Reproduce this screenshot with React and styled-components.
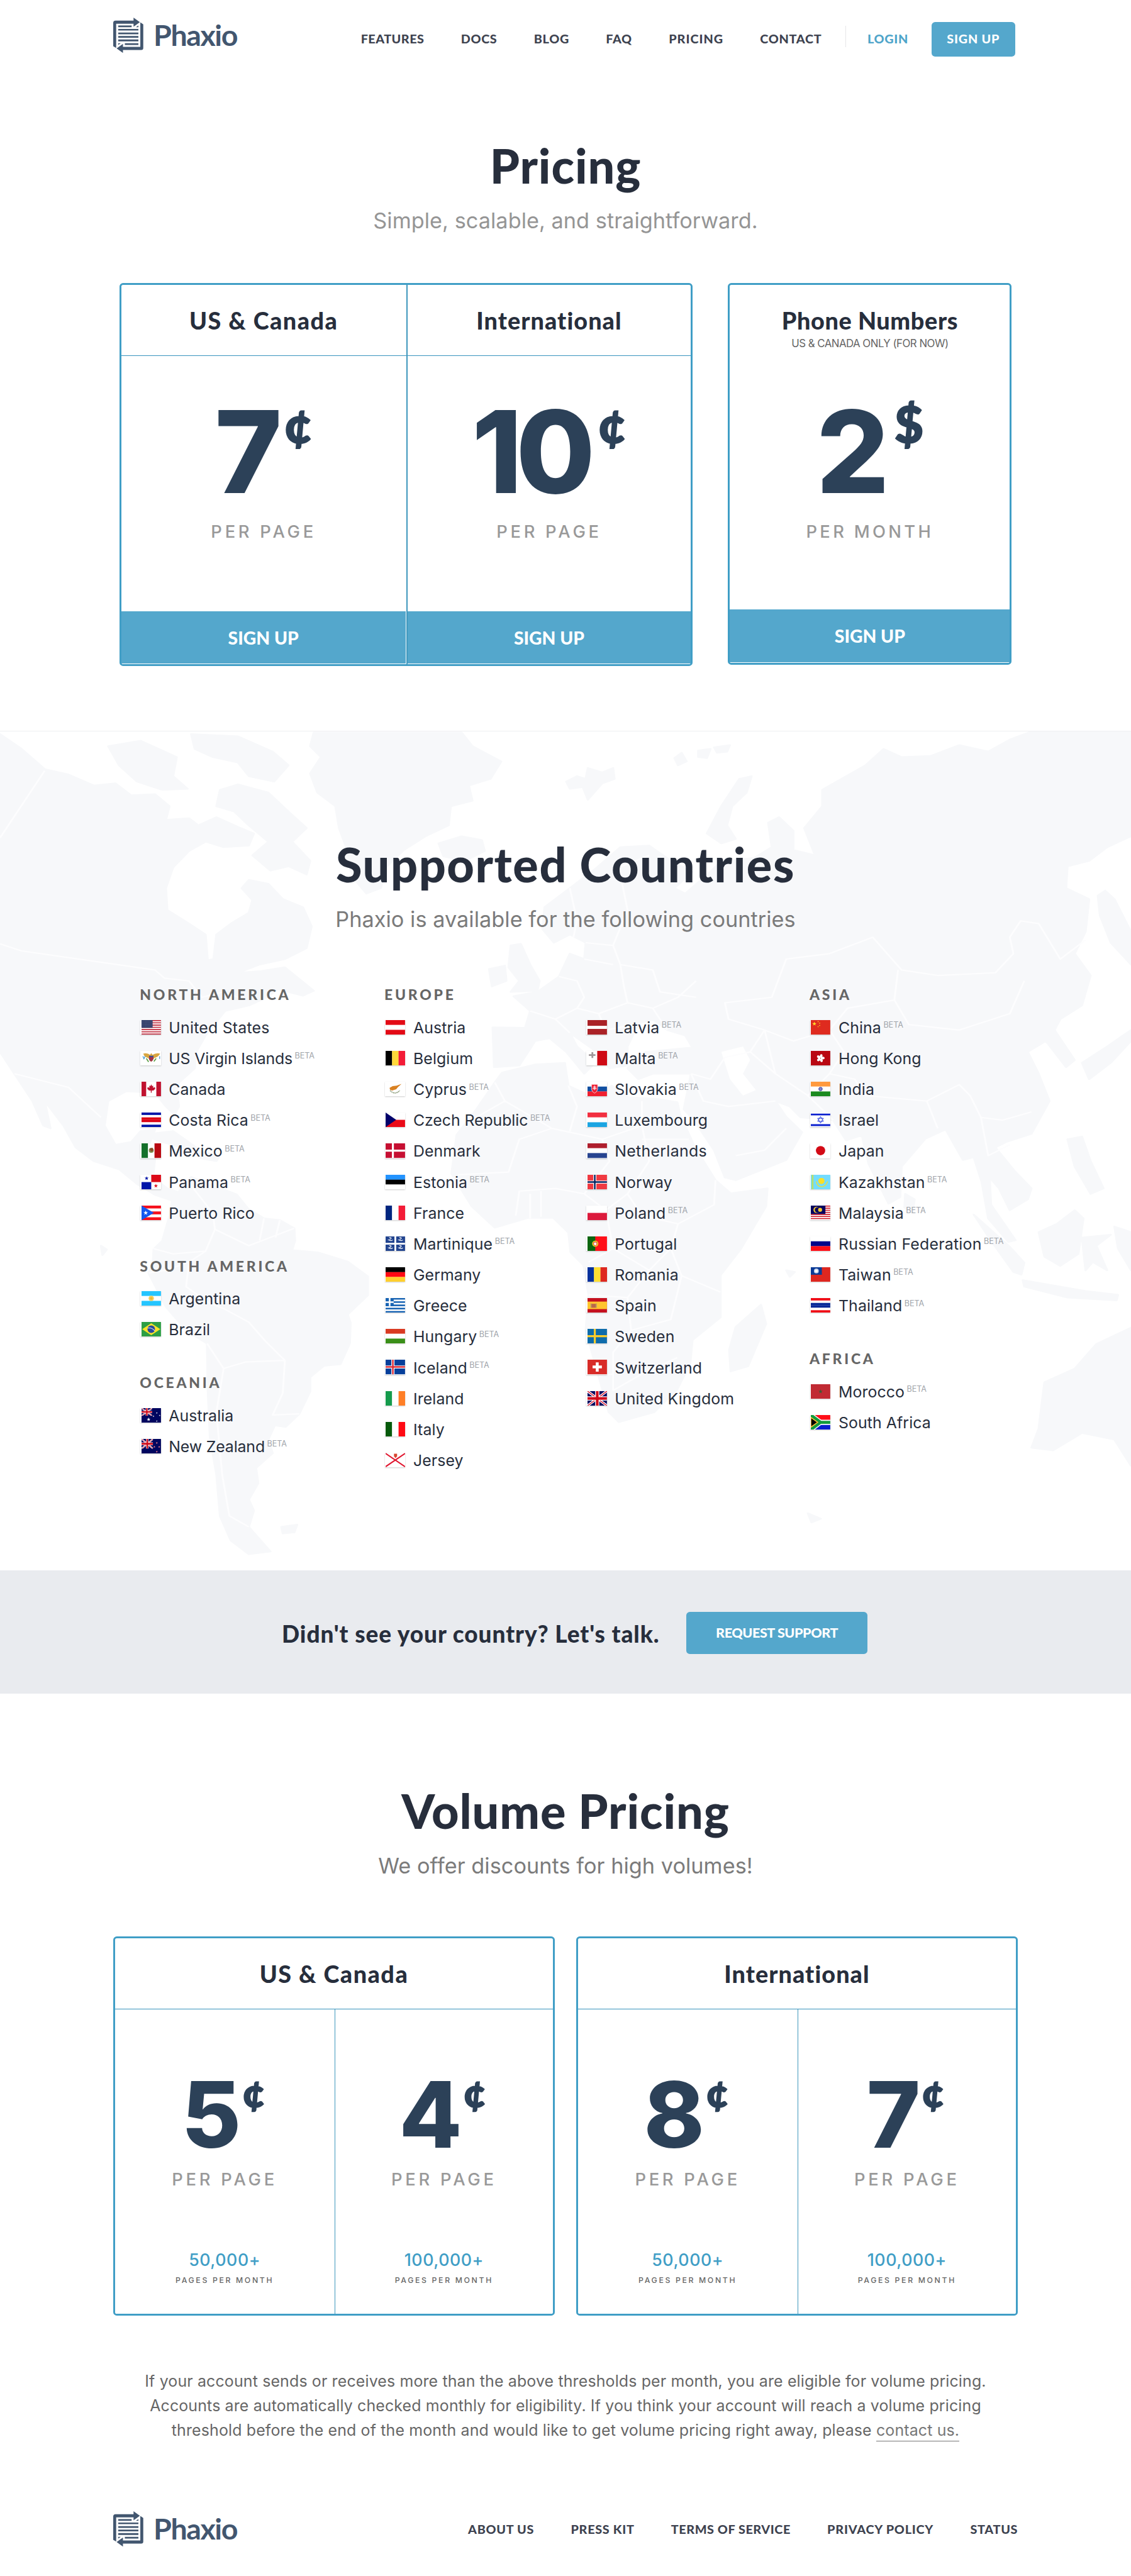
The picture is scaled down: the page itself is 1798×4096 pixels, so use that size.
import React from "react";
import styled, { createGlobalStyle } from "styled-components";

/* 1rem = ten design pixels */
const GlobalStyle = createGlobalStyle`
  html { font-size: 7.0234px; }
  body { margin: 0; background: #fff; color: #272e3c; font-family: Inter, "Liberation Sans", sans-serif; }
  *, *::before, *::after { box-sizing: border-box; }
`;

const display = `Lato, "Liberation Sans", sans-serif`;
const body = `Inter, "Liberation Sans", sans-serif`;
const c = {
  ink: "#272e3c",
  nav: "#3e4350",
  logo: "#42566f",
  price: "#2c4158",
  blue: "#54a7cc",
  line: "#409ec6",
  grey: "#999",
  dark: "#666",
};

const Page = styled.div`
  width: 256rem;
  height: 4096px;
  overflow: hidden;
  background: #fff;
`;

/* ---------- logo and navigation ---------- */

const LogoLink = styled.a`
  display: flex;
  align-items: center;
  gap: 2.35rem;
  height: 8rem;
  color: ${c.logo};
  svg { width: 6.8rem; height: 8rem; display: block; }
`;
const LogoName = styled.span`
  font: 700 6.63rem/7.8rem ${display};
  letter-spacing: -0.03em;
  margin-top: -0.2rem;
`;

const Logo = () => (
  <LogoLink>
    <svg viewBox="33 30 204 240" fill="currentColor">
      <path d="M33 66Q33 50 49 50H171V30L214 61L171 92V72H53V236L33 224Z" />
      <path d="M217 62L237 76V236Q237 250 223 250H99V270L56 239L99 208V229H217Z" />
      <path d="M67 83H158V95H67ZM187 95L204 83V95ZM67 107H204V118H67ZM67 131H204V143H67ZM67 155H204V167H67ZM67 179H204V191H67ZM112 204H204V216H112ZM67 204H84L67 216Z" />
    </svg>
    <LogoName>Phaxio</LogoName>
  </LogoLink>
);

const Header = styled.header`
  display: flex;
  justify-content: space-between;
  align-items: flex-start;
  height: 16rem;
  padding: 4rem 26.2rem 0 25.6rem;
`;
const Nav = styled.nav`
  display: flex;
  align-items: center;
  gap: 8.3rem;
`;
const NavLink = styled.a`
  font: 900 2.82rem/8rem ${display};
  letter-spacing: ${(p) => p.$track || "0.035em"};
  color: ${(p) => (p.$accent ? "#4fa5ca" : c.nav)};
  white-space: nowrap;
`;
const HeaderNav = styled(Nav)`
  padding-top: 0.7rem;
  height: 8.8rem;
`;
const Account = styled.div`
  display: flex;
  align-items: center;
  margin-left: -3rem;
`;
const Separator = styled.span`
  width: 1px;
  height: 4.8rem;
  margin: -1rem 4.9rem 0 0;
  background: #e6e6e8;
`;
const SignUp = styled.a`
  height: 7.9rem;
  width: 19rem;
  margin: 0.3rem 0 0 5.2rem;
  border-radius: 0.8rem;
  background: ${c.blue};
  color: #fff;
  text-align: center;
  font: 900 2.82rem/7.6rem ${display};
  letter-spacing: 0.04em;
`;

/* ---------- headings ---------- */

const Title = styled.h1`
  margin: 0;
  padding-top: 0.4rem;
  height: 12rem;
  font: 900 10.76rem/12rem ${display};
  letter-spacing: ${(p) => p.$track};
  text-align: center;
  color: ${c.ink};
`;
const Subtitle = styled.p`
  margin: 3.9rem 0 0;
  font: 400 4.88rem/6rem ${body};
  letter-spacing: 0.001em;
  text-align: center;
  color: ${(p) => p.$color || "#7b7b7b"};
`;

/* ---------- price cards ---------- */

const Hero = styled.section`
  height: 149.5rem;
  padding-top: 15.04rem;
`;
const PriceRow = styled.div`
  display: flex;
  align-items: flex-start;
  gap: 8rem;
  padding: 11.1rem 0 0 27rem;
`;
const Card = styled.div`
  display: grid;
  grid-template-columns: ${(p) => p.$cols || "1fr"};
  grid-template-rows: ${(p) => p.$rows || "1fr"};
  width: ${(p) => p.$w};
  height: ${(p) => p.$h};
  border: 3px solid ${c.line};
  border-radius: 0.8rem;
`;
const Cell = styled.div`
  display: flex;
  flex-direction: column;
  align-items: center;
  border-right: ${(p) => (p.$divider ? `${p.$divider}px solid #3f97bd` : 0)};
`;
const CardTitle = styled.h2`
  align-self: stretch;
  margin: 0;
  height: 16.1rem;
  font: 900 5.38rem/16.1rem ${display};
  letter-spacing: ${(p) => p.$track};
  text-align: center;
  border-bottom: 1px solid #3894bd;
  grid-column: 1 / -1;
`;
const PlainTitle = styled.h2`
  margin: 5.1rem 0 0;
  font: 900 5.38rem/6rem ${display};
  letter-spacing: 0.0165em;
`;
const Note = styled.p`
  margin: 0.8rem 0 0;
  font: 400 2.4rem/3rem ${body};
  letter-spacing: -0.031em;
  color: ${c.dark};
`;
const Price = styled.div`
  display: flex;
  align-items: flex-start;
  color: ${c.price};
  margin-top: ${(p) => p.$top};
  padding-right: ${(p) => (p.$small ? "0.6rem" : 0)};
  font: 800 ${(p) => (p.$small ? "20.7rem/16rem" : "25.9rem/20rem")} ${body};
  letter-spacing: -0.055em;
`;
const Unit = styled.span`
  font: 900 ${(p) => (p.$small ? "9rem" : "11.3rem")}/1 ${display};
  -webkit-text-stroke: 0.3rem ${c.price};
  letter-spacing: 0;
  margin: ${(p) => (p.$small ? "-1.7rem" : "-2rem")} 0 0 ${(p) => p.$gap || "1.8rem"};
`;
const Per = styled.p`
  margin: ${(p) => p.$top} 0 0;
  font: 450 3.9rem/4rem ${body};
  letter-spacing: ${(p) => p.$track || "0.172em"};
  color: ${c.grey};
`;
const CardButton = styled.a`
  align-self: stretch;
  margin: auto ${(p) => (p.$gapRight ? "1px" : 0)} 1px 0;
  height: 11.9rem;
  background: ${c.blue};
  color: #fff;
  text-align: center;
  font: 900 4.03rem/12.1rem ${display};
`;

/* ---------- supported countries ---------- */

const Countries = styled.section`
  position: relative;
  height: 190rem;
  padding-top: 23.6rem;
  border-top: 1px solid #eeeff1;
`;
const MapLayer = styled.svg`
  position: absolute;
  inset: 0;
  width: 100%;
  height: 100%;
`;
const CountriesBody = styled.div`
  position: relative;
`;
const Columns = styled.div`
  display: grid;
  grid-template-columns: 55.35rem 45.6rem 50.65rem 1fr;
  padding: 12rem 0 0 31.65rem;
`;
const Column = styled.div`
  padding-top: ${(p) => (p.$offset ? "6.07rem" : 0)};
`;
const Group = styled.div`
  margin-bottom: 6.36rem;
`;
const Region = styled.h3`
  margin: 0 0 2.07rem;
  font: 900 3.27rem/4rem ${display};
  letter-spacing: 0.163em;
  color: ${c.dark};
`;
const Country = styled.div`
  display: flex;
  align-items: center;
  height: 7rem;
  font: 400 3.54rem/7rem ${body};
  letter-spacing: ${(p) => p.$track || "0.003em"};
  white-space: nowrap;
`;
const Beta = styled.span`
  font-size: 1.8rem;
  line-height: 7rem;
  letter-spacing: -0.005em;
  margin: -1.3rem 0 0 0.5rem;
  color: #a0a4aa;
`;
const FlagBox = styled.span`
  width: 4.6rem;
  height: 3.3rem;
  padding-left: 0.2rem;
  margin: -0.3rem 1.8rem 0 0.15rem;
  background: #fff;
  box-shadow: 0 1px 2px rgba(0, 0, 0, 0.2);
  > svg { display: block; width: 100%; height: 100%; }
`;

/* ---------- banner ---------- */

const Banner = styled.section`
  display: flex;
  align-items: center;
  height: 27.9rem;
  padding: 0.5rem 0 0 63.8rem;
  background: #e9ebef;
`;
const Question = styled.p`
  margin: 0.4rem 0 0;
  width: 91.5rem;
  font: 900 5.27rem/8rem ${display};
  letter-spacing: 0.025em;
  white-space: nowrap;
`;
const Request = styled.a`
  width: 41.1rem;
  height: 9.5rem;
  border-radius: 0.8rem;
  background: ${c.blue};
  color: #fff;
  text-align: center;
  font: 900 3.08rem/9.4rem ${display};
  letter-spacing: -0.022em;
`;

/* ---------- volume pricing ---------- */

const Volume = styled.section`
  padding-top: 20.1rem;
`;
const VolumeRow = styled.div`
  display: flex;
  gap: 4.8rem;
  padding: 13rem 0 0 25.6rem;
`;
const Threshold = styled.p`
  margin: 13.8rem 0 0;
  font: 500 3.81rem/5rem ${body};
  letter-spacing: 0.02em;
  color: ${c.line};
`;
const PerMonth = styled.p`
  margin: 1.07rem 0 0;
  font: 450 1.75rem/2.4rem ${body};
  letter-spacing: 0.215em;
  color: ${c.dark};
`;
const Terms = styled.p`
  margin: 12.1rem 0 0;
  font: 400 3.55rem/5.6rem ${body};
  letter-spacing: 0.0058em;
  text-align: center;
  white-space: nowrap;
  color: ${c.dark};
`;
const TextLink = styled.a`
  color: #777;
  padding-bottom: 0.2rem;
  border-bottom: 1px solid #777;
`;
const Footer = styled.footer`
  display: flex;
  justify-content: space-between;
  align-items: center;
  padding: 15.5rem 25.6rem 0;
`;

/* ---------- flags ---------- */

const horizontal = (...colors) => {
  const h = 33 / colors.length;
  return colors.map((f, i) => <rect key={i} y={i * h} width="44" height={h + 0.2} fill={f} />);
};
const vertical = (...colors) => {
  const w = 44 / colors.length;
  return colors.map((f, i) => <rect key={i} x={i * w} width={w + 0.2} height="33" fill={f} />);
};
const cross = (bg, outer, inner) => (
  <>
    <rect width="44" height="33" fill={bg} />
    <path d="M16.500 0V33M0 16.500H44" stroke={outer} strokeWidth={inner ? 7 : 4.5} />
    {inner && <path d="M16.500 0V33M0 16.500H44" stroke={inner} strokeWidth="3.500" />}
  </>
);
const star = (x, y, r, fill) => {
  const pts = Array.from({ length: 10 }, (_, i) => {
    const a = (Math.PI / 5) * i - Math.PI / 2;
    const q = i % 2 ? r * 0.4 : r;
    return `${(x + q * Math.cos(a)).toFixed(2)},${(y + q * Math.sin(a)).toFixed(2)}`;
  });
  return <polygon points={pts.join(" ")} fill={fill} />;
};
const union = (w, h) => (
  <svg width={w} height={h} viewBox="0 0 44 33" preserveAspectRatio="none">
    <rect width="44" height="33" fill="#00065f" />
    <path d="M0 0L44 33M44 0L0 33" stroke="#fff" strokeWidth="5.500" />
    <path d="M0 0L44 33M44 0L0 33" stroke="#d8001b" strokeWidth="1.800" />
    <path d="M22 0V33M0 16.500H44" stroke="#fff" strokeWidth="9.500" />
    <path d="M22 0V33M0 16.500H44" stroke="#d00a1a" strokeWidth="6" />
  </svg>
);

const flags = {
  us: (
    <>
      {horizontal(..."rwrwrwrwrwrwr".split("").map((k) => (k === "r" ? "#bf2a3c" : "#fff")))}
      <rect width="25" height="17.500" fill="#2d3a66" />
      <path d="M2 3H24M2 6.500H24M2 10H24M2 13.500H24" stroke="#cfd4e4" strokeWidth="1" strokeDasharray="1 2.200" />
    </>
  ),
  vi: (
    <>
      <rect width="44" height="33" fill="#fff" />
      <path d="M4 6Q14 4 19 9L22 5L25 9Q32 4 42 6Q38 14 29 16L22 25L15 16Q6 14 4 6Z" fill="#d9a640" />
      <path d="M17 12H27V18Q25 23 22 24Q18 23 17 18Z" fill="#a3334a" />
      <path d="M17 11H27V14H17Z" fill="#3a4f9a" />
      <path d="M3 12L5.500 18L8 12M41 12V18" stroke="#2f8fce" strokeWidth="1.600" fill="none" />
      <path d="M11 17L16 25M33 17L28 24" stroke="#5fa04a" strokeWidth="2.500" />
    </>
  ),
  ca: (
    <>
      <rect width="44" height="33" fill="#fff" />
      <path d="M0 0H10.500V33H0ZM33.500 0H44V33H33.500Z" fill="#c0122f" />
      <path d="M22 6L24 10L26.500 9L26 14L30 12L31 16L27 20H23V25H21V20H17L13 16L14 12L18 14L17.500 9L20 10Z" fill="#c0122f" />
    </>
  ),
  cr: horizontal("#0015a8", "#fff", "#dc0012", "#dc0012", "#fff", "#0015a8"),
  mx: (
    <>
      {vertical("#14702b", "#fff", "#b90a12")}
      <circle cx="22" cy="16" r="5.500" fill="#7c8c4c" />
      <path d="M18 12L25 10L27 16L22 19Z" fill="#8a4a28" />
    </>
  ),
  pa: (
    <>
      <rect width="44" height="33" fill="#fff" />
      <rect x="22" width="22" height="16.500" fill="#dc0a18" />
      <rect y="16.500" width="22" height="16.500" fill="#0015a8" />
      {star(11.5, 8, 4.8, "#0015a8")}
      {star(32.5, 25, 4.8, "#dc0a18")}
    </>
  ),
  pr: (
    <>
      {horizontal("#f5101c", "#fff", "#f5101c", "#fff", "#f5101c")}
      <path d="M0 0L28 16.500L0 33Z" fill="#1358f0" />
      {star(9.5, 16.5, 5.4, "#fff")}
    </>
  ),
  ar: (
    <>
      {horizontal("#25c5ff", "#fff", "#25c5ff")}
      <circle cx="22" cy="16.500" r="6" fill="#f5cf5a" />
      <circle cx="22" cy="16.500" r="3" fill="#eab93c" />
    </>
  ),
  br: (
    <>
      <rect width="44" height="33" fill="#2e9f45" />
      <path d="M22 3L42.500 16.500L22 30L1.500 16.500Z" fill="#fae22a" />
      <circle cx="22" cy="16.500" r="8.500" fill="#2b4a9b" />
      <path d="M14 14Q23 12 30 20" stroke="#dfe8f4" strokeWidth="1.500" fill="none" />
    </>
  ),
  au: (
    <>
      <rect width="44" height="33" fill="#00065f" />
      {union(24, 17.5)}
      {star(16, 25.5, 4.5, "#fff")}
      {star(34.5, 11, 2, "#fff")}
      {star(27, 18.5, 2, "#fff")}
      {star(41, 16.5, 2, "#fff")}
      {star(34.5, 29.5, 2, "#fff")}
    </>
  ),
  nz: (
    <>
      <rect width="44" height="33" fill="#00065f" />
      {union(26, 22)}
      {star(34.5, 9, 2.6, "#f3808c")}
      {star(29, 18, 2.6, "#f3808c")}
      {star(40, 18, 2.6, "#f3808c")}
      {star(34.5, 29, 2.6, "#f3808c")}
    </>
  ),
  at: horizontal("#e30a15", "#fff", "#e30a15"),
  be: vertical("#000", "#ffd93a", "#f31c37"),
  cy: (
    <>
      <rect width="44" height="33" fill="#fff" />
      <path d="M9 14L16 10L25 9L36 5L28 12L24 17L15 20L10 18Z" fill="#d98122" />
      <path d="M10 20Q22 31 32 20" stroke="#8a9b78" strokeWidth="2.200" fill="none" strokeDasharray="3 1" />
    </>
  ),
  cz: (
    <>
      {horizontal("#fff", "#ea0a18")}
      <path d="M0 0L24 16.500L0 33Z" fill="#02026b" />
    </>
  ),
  dk: cross("#c60f32", "#fff"),
  ee: horizontal("#2393ff", "#000", "#fff"),
  fr: vertical("#00267f", "#fff", "#f31c37"),
  mq: (
    <>
      <rect width="44" height="33" fill="#22448f" />
      <path d="M22 0V33M0 16.500H44" stroke="#fff" strokeWidth="4" />
      {[[11, 7], [34, 7], [11, 25], [34, 25]].map(([x, y]) => (
        <path key={x + "-" + y} d={`M${x - 3} ${y - 4}q6 -1 4 2t-5 3q5 3 9 0`} stroke="#fff" strokeWidth="1.600" fill="none" />
      ))}
    </>
  ),
  de: horizontal("#000", "#ff0a14", "#ffcf2e"),
  gr: (
    <>
      {horizontal(..."bwbwbwbwb".split("").map((k) => (k === "b" ? "#1763b3" : "#fff")))}
      <rect width="18.300" height="18.300" fill="#1763b3" />
      <path d="M9.200 0V18.300M0 9.200H18.300" stroke="#fff" strokeWidth="3.600" />
    </>
  ),
  hu: horizontal("#d93a22", "#fff", "#3a8f18"),
  is: cross("#063f9b", "#fff", "#db2a34"),
  ie: vertical("#159b4c", "#fff", "#ff7f27"),
  it: vertical("#065a0c", "#fff", "#ff0a14"),
  je: (
    <>
      <rect width="44" height="33" fill="#fff" />
      <path d="M0 1.500L44 31.500M44 1.500L0 31.500" stroke="#e0162f" strokeWidth="3" />
      <path d="M19 2H26V8L22.500 12L19 8Z" fill="#d8452f" />
    </>
  ),
  lv: (
    <>
      <rect width="44" height="33" fill="#aa2227" />
      <rect y="13" width="44" height="7" fill="#fff" />
    </>
  ),
  mt: (
    <>
      {vertical("#fff", "#cf0a15")}
      <path d="M11 3V16M3 9.500H18" stroke="#a0989a" strokeWidth="4" />
    </>
  ),
  sk: (
    <>
      {horizontal("#fff", "#114fa1", "#f01f2f")}
      <path d="M9 6H23V17Q21 24 16 26Q10 23 9 17Z" fill="#ee2035" stroke="#fff" strokeWidth="1" />
      <path d="M16 9V19M12.500 12H19.500M11.500 15.500H20.500" stroke="#fff" strokeWidth="1.500" />
    </>
  ),
  lu: horizontal("#f22f40", "#fff", "#1ba4e2"),
  nl: horizontal("#ae1e2d", "#fff", "#27448f"),
  no: cross("#f03a42", "#fff", "#04215f"),
  pl: horizontal("#fff", "#dc1a3c"),
  pt: (
    <>
      <rect width="44" height="33" fill="#ff0f18" />
      <rect width="17.500" height="33" fill="#0b650e" />
      <circle cx="17.500" cy="16.500" r="7" fill="#e8d02c" />
      <path d="M14 13H21V18Q19 21 17.500 21Q15 21 14 18Z" fill="#fff" stroke="#e3202c" strokeWidth="1.400" />
    </>
  ),
  ro: vertical("#06319c", "#ffdf32", "#de2820"),
  es: (
    <>
      <rect width="44" height="33" fill="#c5101f" />
      <rect y="8" width="44" height="17" fill="#ffc52e" />
      <path d="M9 13H19V22H9Z" fill="#b9664a" />
      <path d="M8 12V22M20 12V22" stroke="#9a8f7a" strokeWidth="1.500" />
    </>
  ),
  se: cross("#0f6cab", "#ffcd2a"),
  ch: (
    <>
      <rect width="44" height="33" fill="#d82b27" />
      <path d="M22 6V27M11.500 16.500H32.500" stroke="#fff" strokeWidth="6.500" />
    </>
  ),
  gb: union(44, 33),
  cn: (
    <>
      <rect width="44" height="33" fill="#df2b1f" />
      {star(8, 8.5, 5, "#ffdc28")}
      {star(16.5, 3.5, 1.8, "#ffdc28")}
      {star(20, 7, 1.8, "#ffdc28")}
      {star(20, 12, 1.8, "#ffdc28")}
      {star(16.5, 15, 1.8, "#ffdc28")}
    </>
  ),
  hk: (
    <>
      <rect width="44" height="33" fill="#b90812" />
      {[0, 72, 144, 216, 288].map((a) => (
        <ellipse key={a} cx="22" cy="11.500" rx="3" ry="4.300" fill="#fff" transform={`rotate(${a + 15} 22 16.500)`} />
      ))}
    </>
  ),
  in: (
    <>
      {horizontal("#ff9a3e", "#fff", "#1b8a1f")}
      <circle cx="22" cy="16.500" r="4" fill="#8186c8" stroke="#272d92" strokeWidth="1.200" />
    </>
  ),
  il: (
    <>
      <rect width="44" height="33" fill="#fff" />
      <path d="M0 4.500H44M0 28.500H44" stroke="#0a1fcf" strokeWidth="4" />
      <path d="M22 9L28.500 20H15.500ZM22 24L15.500 13H28.500Z" stroke="#2a40dc" strokeWidth="1.400" fill="none" />
    </>
  ),
  jp: (
    <>
      <rect width="44" height="33" fill="#fff" />
      <circle cx="22" cy="16.500" r="10.500" fill="#d30a15" />
    </>
  ),
  kz: (
    <>
      <rect width="44" height="33" fill="#73dcff" />
      <rect x="2" width="4" height="33" fill="#b9df6a" />
      <circle cx="24" cy="14" r="7" fill="#fbe025" />
      <path d="M12 15Q15 27 24 27Q34 27 38 15" stroke="#dfe24a" strokeWidth="2.200" fill="none" />
    </>
  ),
  my: (
    <>
      {horizontal(..."rwrwrwrwrwrwrw".split("").map((k) => (k === "r" ? "#cf1220" : "#fff")))}
      <rect width="33" height="19" fill="#05055f" />
      <circle cx="13" cy="9.500" r="7" fill="#fccb2e" />
      <circle cx="15" cy="9.500" r="6" fill="#05055f" />
      <circle cx="21" cy="9.500" r="4.500" fill="#fccb2e" />
    </>
  ),
  ru: horizontal("#fff", "#00058a", "#ff0f18"),
  tw: (
    <>
      <rect width="44" height="33" fill="#de2720" />
      <rect width="25" height="17" fill="#0b3b96" />
      <circle cx="12.500" cy="8.500" r="5.500" fill="#c5d1ea" />
      <circle cx="12.500" cy="8.500" r="3.200" fill="#fff" />
    </>
  ),
  th: horizontal("#f00d17", "#fff", "#062898", "#062898", "#fff", "#f00d17"),
  ma: (
    <>
      <rect width="44" height="33" fill="#c12a33" />
      {star(22, 16.5, 5, "#3c5a34")}
    </>
  ),
  za: (
    <>
      {horizontal("#ff0f18", "#fff", "#0a1ed0")}
      <path d="M0 0L22 16.500L0 33M18 16.500H44" stroke="#fff" strokeWidth="11" fill="none" />
      <path d="M0 0L22 16.500L0 33M18 16.500H44" stroke="#139b3c" strokeWidth="7" fill="none" />
      <path d="M0 5.500L15.500 16.500L0 27.500Z" fill="#000" stroke="#fcbf30" strokeWidth="2.200" />
    </>
  ),
};

const columns = [
  [
    ["North America", [["us", "United States", 0, "0.009em"], ["vi", "US Virgin Islands", 1, "-0.006em"], ["ca", "Canada"], ["cr", "Costa Rica", 1], ["mx", "Mexico", 1], ["pa", "Panama", 1], ["pr", "Puerto Rico"]]],
    ["South America", [["ar", "Argentina"], ["br", "Brazil"]]],
    ["Oceania", [["au", "Australia"], ["nz", "New Zealand", 1, "-0.006em"]]],
  ],
  [
    ["Europe", [["at", "Austria"], ["be", "Belgium"], ["cy", "Cyprus", 1], ["cz", "Czech Republic", 1, "-0.003em"], ["dk", "Denmark"], ["ee", "Estonia", 1], ["fr", "France"], ["mq", "Martinique", 1], ["de", "Germany"], ["gr", "Greece"], ["hu", "Hungary", 1], ["is", "Iceland", 1], ["ie", "Ireland"], ["it", "Italy"], ["je", "Jersey"]]],
  ],
  [
    [null, [["lv", "Latvia", 1], ["mt", "Malta", 1], ["sk", "Slovakia", 1], ["lu", "Luxembourg"], ["nl", "Netherlands", 0, "0.012em"], ["no", "Norway"], ["pl", "Poland", 1], ["pt", "Portugal"], ["ro", "Romania"], ["es", "Spain"], ["se", "Sweden"], ["ch", "Switzerland"], ["gb", "United Kingdom"]]],
  ],
  [
    ["Asia", [["cn", "China", 1], ["hk", "Hong Kong"], ["in", "India"], ["il", "Israel"], ["jp", "Japan"], ["kz", "Kazakhstan", 1], ["my", "Malaysia", 1], ["ru", "Russian Federation", 1, "0.009em"], ["tw", "Taiwan", 1], ["th", "Thailand", 1]]],
    ["Africa", [["ma", "Morocco", 1], ["za", "South Africa"]]],
  ],
];

/* ---------- world map ---------- */

const land = [
  "M0 18L30 45L62 82L95 92L130 112L160 108L182 130L215 128L235 150L230 175L262 172L275 185L300 170L330 188L352 200L345 222L310 225L285 215L262 232L240 262L230 300L232 340L262 365L285 385L288 432L296 430L300 385L320 365L345 345L350 322L335 300L345 285L372 292L392 320L420 335L432 370L425 410L395 430L360 440L330 455L362 452L395 445L435 488L420 497L385 485L370 500L345 515L312 525L300 545L285 570L272 600L270 630L245 660L248 700L242 715L230 700L215 675L175 672L150 690L145 735L160 770L182 765L195 745L215 742L205 775L190 790L215 795L212 830L232 850L250 858L238 872L215 862L190 842L165 815L130 800L105 775L88 735L62 690L70 740L60 735L45 690L20 640L0 600Z",
  "M435 15H640L655 40L695 68L680 100L650 112L655 140L625 150L622 185L590 205L560 230L535 262L528 300L508 310L492 285L482 255L480 225L470 190L465 150L440 125L430 90L445 60L430 40Z",
  "M265 18L330 22L378 50L400 75L380 105L345 95L330 70L295 60L270 45Z",
  "M330 110L372 125L400 160L425 190L405 215L430 250L425 275L400 260L375 268L350 240L372 215L345 185L325 160L300 150L305 120Z",
  "M150 40L195 30L245 60L240 95L260 118L225 120L190 105L165 75Z",
  "M608 218L640 205L668 212L672 232L645 250L615 242Z",
  "M785 105L800 95L812 100L815 80L835 88L850 80L852 100L835 108L815 138L808 115L790 118ZM935 62L945 52L952 68L940 75ZM968 48L985 45L980 62L968 60ZM990 42L1012 38L1008 50L994 52Z",
  "M708 405L722 402L735 440L748 470L745 488L708 490L720 470L705 445ZM678 448L700 442L702 470L682 480Z",
  "M239 870L265 829L328 861L344 887L366 905L388 908L408 923L409 946L405 963L440 967L482 984L510 1011L510 1046L482 1081L486 1096L485 1134L472 1172L449 1175L430 1196L430 1222L415 1263L396 1287L381 1284L372 1310L378 1335L355 1362L358 1390L345 1420L352 1440L345 1470L375 1515L345 1520L320 1495L305 1450L300 1374L291 1305L288 1217L287 1134L259 1111L230 1067L206 1005L212 987L213 961L225 946L235 900Z",
  "M390 1470L412 1466L408 1480L392 1482ZM195 752L240 745L272 775L268 782L225 765ZM275 782L305 790L300 800L278 795Z",
  "M696 638L742 623L783 620L788 662L823 683L848 662L872 683L911 686L939 692L943 716L964 776L992 835L1013 859L1064 850L1062 883L1027 961L999 1009L999 1086L960 1128L957 1170L939 1218L907 1260L858 1278L844 1260L830 1194L812 1110L816 1045L809 991L791 967L788 931L767 904L732 904L686 922L654 883L626 823L633 752L661 704L686 656Z",
  "M1055 1063L1062 1098L1037 1176L1013 1185L1011 1146L1020 1104Z",
  "M683 555L728 556L735 525L712 498L745 490L775 462L790 420L810 430L812 400L790 385L768 400L752 375L755 335L790 300L825 265L860 225L900 222L930 250L960 270L935 300L950 310L985 270L1000 250L1045 245L1070 225L1065 180L1080 170L1100 195L1100 230L1130 240L1115 190L1140 150L1140 120L1200 75L1225 45L1250 60L1290 58L1330 38L1370 50L1400 28L1430 13H1568V205L1535 225L1510 250L1480 260L1478 300L1510 320L1505 380L1490 420L1512 460L1500 515L1470 540L1462 560L1490 615L1478 628L1450 580L1425 600L1440 640L1455 690L1430 750L1395 765L1380 775L1408 820L1430 850L1425 870L1400 890L1385 850L1372 830L1374 880L1408 945L1398 948L1370 905L1361 838L1350 793L1335 798L1311 742L1283 759L1250 810L1248 866L1232 878L1221 849L1204 804L1195 753L1173 762L1155 725L1110 720L1095 700L1075 690L1090 719L1112 747L1090 798L1020 835L1005 830L990 780L962 725L948 705L955 660L958 640L905 640L885 650L870 630L895 600L960 592L950 570L925 560L905 540L885 548L870 590L870 625L845 630L822 595L790 565L800 590L825 620L810 640L785 600L762 575L742 580L720 625L685 628Z",
  "M980 200L1000 150L1025 100L1042 95L1035 125L1015 150L1008 185L1020 210L1000 218Z",
  "M1350 898L1400 957L1420 986L1416 1008L1405 1003L1374 946ZM1418 1018L1505 1038L1550 1045L1548 1055L1480 1050L1420 1030ZM1440 930L1465 915L1490 890L1502 905L1495 970L1470 992L1448 975ZM1500 940L1540 935L1520 955L1535 1000L1515 985L1505 1000ZM1480 760L1500 755L1512 800L1530 850L1512 860L1490 810ZM1545 920L1568 930V1000L1550 960Z",
  "M1448 1205L1490 1180L1520 1135L1568 1105V1358L1545 1310L1500 1298L1460 1330L1430 1325L1440 1290Z",
  "M1520 290L1545 320L1568 380V440L1540 400L1525 350ZM1500 620L1535 590L1568 560V580L1540 620L1510 650ZM1255 860L1268 870L1265 895L1254 885Z",
  "M1120 1445L1138 1455L1125 1462ZM1090 1000L1102 1003L1095 1012ZM140 955L148 962L142 972Z",
];
const seas = [
  "M1000 600L1030 590L1040 615L1030 640L1048 670L1030 680L1012 650Z",
  "M1568 215L1535 232L1508 262L1482 266L1490 300L1515 318L1535 300L1568 350Z",
];
const borders = [
  "M0 208L62 85M0 402L30 415L215 450L228 465L262 470L280 500L310 490L340 505",
  "M20 640L95 665L140 720",
  "M265 845L280 870L295 895L298 925L285 965L262 985L258 1030L290 1060L310 1070L345 1095L368 1130L395 1165L392 1225L378 1265L415 1263M298 925L345 955L408 923M366 905L360 945M388 908L382 940M287 1134L310 1180L340 1168L395 1165M310 1180L300 1260L308 1374L318 1450L345 1470M206 1005L230 1000L262 985M212 960L240 970L285 965",
  "M686 656L700 690L660 720M700 690L765 740L835 760L890 735V690M765 740L720 760L705 820L635 825M835 760L845 800L810 860L770 850L720 855L715 900M890 760H955M890 735L900 800L870 860L840 890L810 860M870 860L890 900L940 915L990 880L992 835M940 915L930 960L945 1010L999 1040M840 890L850 960L816 985M850 960L900 1000L930 960M816 1045L870 1050L900 1000M870 1050L875 1110L930 1090L945 1010M875 1110L850 1150V1220L890 1190L939 1160M830 1194L850 1190M735 860V905M750 855V902M788 662L800 700L790 745",
  "M735 525L770 540L800 520L830 530L870 510L905 520L940 500L965 470M775 462L800 470L810 500L800 520M812 400L850 405L860 440L905 450L915 490L965 500M810 430L850 440M850 405L870 340L858 262L900 240M790 300L800 360L795 390M870 510L865 480L860 440M830 530L840 560L880 550M770 540L790 565M905 520L925 560",
  "M958 640L985 650L1005 610L1040 600L1060 560L1010 540L1005 510L1070 500L1090 430L1150 420L1210 390L1250 450L1300 460L1380 455L1405 420L1400 390L1415 360L1440 365L1470 430L1505 395M1060 560L1100 580L1150 560L1175 520L1240 505L1245 450M1060 560L1075 640L1120 680L1150 640L1185 650L1200 680L1285 690L1330 660L1345 680L1360 720L1390 725L1430 710M1120 680L1155 725M1285 690L1300 740M1360 720L1370 790L1400 770M1240 505L1260 550L1330 560L1400 530L1420 470M1150 560L1170 600L1150 640M958 640L975 690L1010 700L1075 690M1040 600L1075 640M1020 790L1060 780L1090 740",
];

const WorldMap = () => (
  <MapLayer viewBox="0 13 1568 1536" preserveAspectRatio="none" fill="#f7f8fa" strokeLinejoin="round">
    {land.map((d) => (
      <path key={d} d={d} stroke="#f7f8fa" strokeWidth="3" />
    ))}
    {seas.map((d) => (
      <path key={d} d={d} fill="#fff" />
    ))}
    {borders.map((d) => (
      <path key={d} d={d} fill="none" stroke="#fdfdfe" strokeWidth="2.500" />
    ))}
  </MapLayer>
);

const Rate = ({ n, u = "¢", gap, per, small, top, perTop, track }) => (
  <>
    <Price $small={small} $top={top}>
      {n}
      <Unit $small={small} $gap={gap}>{u}</Unit>
    </Price>
    <Per $top={perTop} $track={track}>{per}</Per>
  </>
);

const VolumeCard = ({ name, track, tiers }) => (
  <Card $w="100rem" $h="85.8rem" $cols="49.8rem 1fr" $rows="16.1rem 1fr">
    <CardTitle $track={track}>{name}</CardTitle>
    {tiers.map(([n, t], i) => (
      <Cell key={t} $divider={i === 0 ? 1 : 0}>
        <Rate n={n} small gap="1.4rem" top="15.8rem" per="PER PAGE" perTop="4.6rem" />
        <Threshold>{t}</Threshold>
        <PerMonth>PAGES PER MONTH</PerMonth>
      </Cell>
    ))}
  </Card>
);

export default function App() {
  return (
    <Page>
      <GlobalStyle />
      <Header>
        <Logo />
        <HeaderNav>
          <NavLink $track="0.0235em">FEATURES</NavLink>
          <NavLink>DOCS</NavLink>
          <NavLink>BLOG</NavLink>
          <NavLink>FAQ</NavLink>
          <NavLink $track="0.05em">PRICING</NavLink>
          <NavLink>CONTACT</NavLink>
          <Account>
            <Separator />
            <NavLink $accent>LOGIN</NavLink>
            <SignUp>SIGN UP</SignUp>
          </Account>
        </HeaderNav>
      </Header>

      <Hero>
        <Title $track="0.012em">Pricing</Title>
        <Subtitle $color="#959595">Simple, scalable, and straightforward.</Subtitle>
        <PriceRow>
          <Card $w="129.8rem" $h="86.8rem" $cols="64.8rem 1fr">
            <Cell $divider={2}>
              <CardTitle $track="0.039em">US &amp; Canada</CardTitle>
              <Rate n="7" per="PER PAGE" top="11.7rem" perTop="6.05rem" />
              <CardButton $gapRight>SIGN UP</CardButton>
            </Cell>
            <Cell>
              <CardTitle $track="0.028em">International</CardTitle>
              <Rate n="10" gap="2rem" per="PER PAGE" top="11.7rem" perTop="6.05rem" />
              <CardButton>SIGN UP</CardButton>
            </Cell>
          </Card>
          <Card $w="64.2rem" $h="86.4rem">
            <Cell>
              <PlainTitle>Phone Numbers</PlainTitle>
              <Note>US &amp; CANADA ONLY (FOR NOW)</Note>
              <Rate n="2" u="$" gap="2.6rem" per="PER MONTH" top="12.9rem" perTop="6rem" track="0.157em" />
              <CardButton>SIGN UP</CardButton>
            </Cell>
          </Card>
        </PriceRow>
      </Hero>

      <Countries>
        <WorldMap />
        <CountriesBody>
          <Title as="h2" $track="0.0206em">Supported Countries</Title>
          <Subtitle>Phaxio is available for the following countries</Subtitle>
          <Columns>
            {columns.map((groups, i) => (
              <Column key={i} $offset={!groups[0][0]}>
                {groups.map(([region, list]) => (
                  <Group key={region || "more"}>
                    {region && <Region>{region.toUpperCase()}</Region>}
                    {list.map(([code, name, beta, track]) => (
                      <Country key={code} $track={track}>
                        <FlagBox>
                          <svg viewBox="0 0 44 33" preserveAspectRatio="none">{flags[code]}</svg>
                        </FlagBox>
                        {name}
                        {beta ? <Beta>BETA</Beta> : null}
                      </Country>
                    ))}
                  </Group>
                ))}
              </Column>
            ))}
          </Columns>
        </CountriesBody>
      </Countries>

      <Banner>
        <Question>Didn't see your country? Let's talk.</Question>
        <Request>REQUEST SUPPORT</Request>
      </Banner>

      <Volume>
        <Title as="h2" $track="0.012em">Volume Pricing</Title>
        <Subtitle>We offer discounts for high volumes!</Subtitle>
        <VolumeRow>
          <VolumeCard name="US & Canada" track="0.039em" tiers={[["5", "50,000+"], ["4", "100,000+"]]} />
          <VolumeCard name="International" track="0.028em" tiers={[["8", "50,000+"], ["7", "100,000+"]]} />
        </VolumeRow>
        <Terms>
          If your account sends or receives more than the above thresholds per month, you are eligible for volume pricing.
          <br />
          Accounts are automatically checked monthly for eligibility. If you think your account will reach a volume pricing
          <br />
          threshold before the end of the month and would like to get volume pricing right away, please{" "}
          <TextLink>contact us.</TextLink>
        </Terms>
      </Volume>

      <Footer>
        <Logo />
        <Nav>
          <NavLink>ABOUT US</NavLink>
          <NavLink>PRESS KIT</NavLink>
          <NavLink $track="0.028em">TERMS OF SERVICE</NavLink>
          <NavLink $track="0.039em">PRIVACY POLICY</NavLink>
          <NavLink>STATUS</NavLink>
        </Nav>
      </Footer>
    </Page>
  );
}
